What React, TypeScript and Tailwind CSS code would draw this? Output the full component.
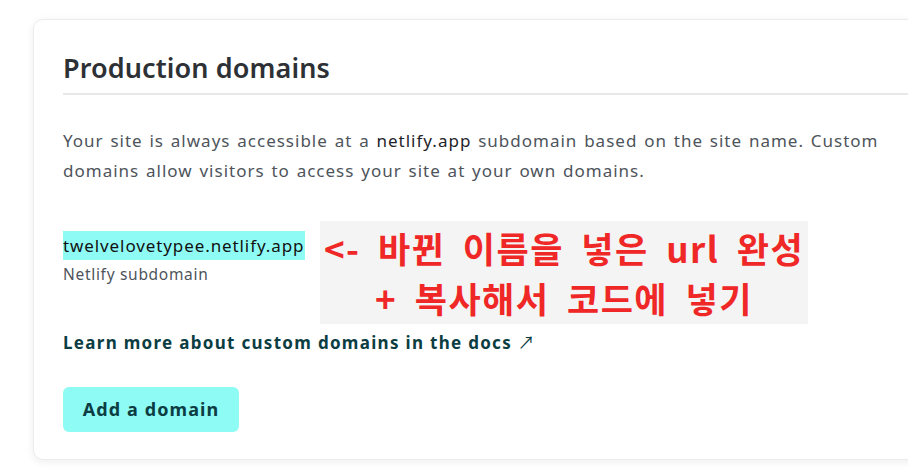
import React from "react";

export default function App() {
  const font = { fontFamily: '"Noto Sans", "Noto Sans CJK KR", sans-serif' };
  return (
    <div className="w-[908px] h-[475px] overflow-hidden bg-white pt-[19px] pl-[33px]" style={font}>
      <div className="w-[920px] h-[441px] bg-white rounded-l-[10px] border border-[#ececec] shadow-[0_2px_8px_rgba(0,0,0,0.07)] pl-[29px] pt-[30px]">
        <h2 className="text-[27px] leading-[36px] font-semibold text-[#2d3136] pb-[7px] border-b-2 border-[#e8e8e8] tracking-[0.1px]">
          Production domains
        </h2>
        <p className="mt-[31px] w-[840px] text-[17px] leading-[30px] text-[#4e545b] tracking-[1px] [word-spacing:1.4px]">
          Your site is always accessible at a <span className="text-[#1f2328]">netlify.app</span> subdomain based on the site name. Custom domains allow visitors to access your site at your own domains.
        </p>
        <div className="mt-[35px] flex items-start">
          <div className="mt-[10px] w-[257px]">
            <div className="inline-block bg-[#8ffbf5] text-[17px] leading-[29px] text-[#111] w-[242px] tracking-[0.9px] whitespace-nowrap">
              twelvelovetypee.netlify.app
            </div>
            <div className="text-[15.5px] leading-[24px] text-[#4e545b] mt-[2px] tracking-[0.7px]">Netlify subdomain</div>
          </div>
          <div
            className="w-[488px] h-[103px] bg-[#f4f4f4] flex flex-col items-center justify-center text-[#ef2727] font-bold text-[35px] leading-[50px] tracking-[1.5px] [word-spacing:8px]"
            style={{ fontFamily: '"Noto Sans CJK KR", sans-serif' }}
          >
            <div>&lt;- 바뀐 이름을 넣은 url 완성</div>
            <div>+ 복사해서 코드에 넣기</div>
          </div>
        </div>
        <div className="mt-[6px] text-[17px] leading-[26px] font-bold text-[#0b3d42] tracking-[1.3px]">
          Learn more about custom domains in the docs <span className="font-normal">↗</span>
        </div>
        <button className="mt-[31px] h-[45px] w-[176px] rounded-[6px] bg-[#8ffbf5] text-[18px] font-bold text-[#0b3d42] tracking-[1.1px]">
          Add a domain
        </button>
      </div>
    </div>
  );
}
